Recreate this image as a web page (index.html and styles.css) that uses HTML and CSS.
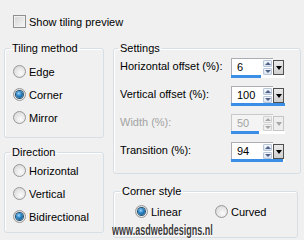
FILE: index.html
```html
<!DOCTYPE html>
<html lang="en">
<head>
    <meta charset="UTF-8">
    <title>Tiling settings</title>
    <link rel="stylesheet" href="styles.css">
</head>
<body>
    <div class="preview">
        <span class="checkbox"></span>
        <span>Show tiling preview</span>
    </div>

    <div class="panels">
        <!-- Left column -->
        <div class="left">
            <fieldset class="group tiling">
                <legend>Tiling method</legend>
                <div class="opt"><span class="radio"></span>Edge</div>
                <div class="opt"><span class="radio on"></span>Corner</div>
                <div class="opt"><span class="radio"></span>Mirror</div>
            </fieldset>

            <fieldset class="group direction">
                <legend>Direction</legend>
                <div class="opt"><span class="radio"></span>Horizontal</div>
                <div class="opt"><span class="radio"></span>Vertical</div>
                <div class="opt"><span class="radio on"></span>Bidirectional</div>
            </fieldset>
        </div>

        <!-- Right column -->
        <div class="right">
            <fieldset class="group settings">
                <legend>Settings</legend>
                <div class="row">
                    <span class="label">Horizontal offset (%):</span>
                    <div class="num">
                        <div class="num-top">
                            <span class="value">6</span>
                            <span class="spin"><i class="up"></i><i class="down"></i></span>
                            <span class="drop"></span>
                        </div>
                        <div class="bar"><span style="width: 30px"></span></div>
                    </div>
                </div>
                <div class="row">
                    <span class="label">Vertical offset (%):</span>
                    <div class="num">
                        <div class="num-top">
                            <span class="value">100</span>
                            <span class="spin"><i class="up"></i><i class="down"></i></span>
                            <span class="drop"></span>
                        </div>
                        <div class="bar"><span style="width: 54px"></span></div>
                    </div>
                </div>
                <div class="row disabled">
                    <span class="label">Width (%):</span>
                    <div class="num">
                        <div class="num-top">
                            <span class="value">50</span>
                            <span class="spin"><i class="up"></i><i class="down"></i></span>
                            <span class="drop"></span>
                        </div>
                        <div class="bar"><span style="width: 28px"></span></div>
                    </div>
                </div>
                <div class="row">
                    <span class="label">Transition (%):</span>
                    <div class="num">
                        <div class="num-top">
                            <span class="value">94</span>
                            <span class="spin"><i class="up"></i><i class="down"></i></span>
                            <span class="drop"></span>
                        </div>
                        <div class="bar"><span style="width: 52px"></span></div>
                    </div>
                </div>
            </fieldset>

            <fieldset class="group corner">
                <legend>Corner style</legend>
                <div class="corner-opts">
                    <div class="opt wide"><span class="radio on"></span>Linear</div>
                    <div class="opt"><span class="radio"></span>Curved</div>
                </div>
            </fieldset>
        </div>
    </div>

    <div class="watermark">www.asdwebdesigns.nl</div>
</body>
</html>
```

FILE: styles.css
```css
body {
    margin: 0;
    width: 304px;
    height: 240px;
    overflow: hidden;
    position: relative;
    background-color: #f0f0f0;
    font-family: "Liberation Sans", Arial, sans-serif;
    font-size: 11px;
    color: #000;
}

/* checkbox row */
.preview {
    display: flex;
    align-items: center;
    gap: 3px;
    height: 13px;
    margin: 15px 0 0 13px;
}
.checkbox {
    width: 13px;
    height: 13px;
    box-sizing: border-box;
    border: 1px solid #8f8f8f;
    background: linear-gradient(135deg, #d3d3d3, #f7f7f7);
    box-shadow: inset 0 0 0 1px #f2f2f2;
}

.panels {
    display: flex;
    gap: 9px;
    margin-top: 13px;
    padding-left: 4px;
}
.left {
    width: 100px;
    display: flex;
    flex-direction: column;
    gap: 7px;
}
.right {
    width: 188px;
    display: flex;
    flex-direction: column;
    gap: 10px;
}

/* group boxes */
.group {
    margin: 0;
    padding: 0;
    min-width: 0;
    border: 1px solid #d5dfe5;
    border-radius: 3px;
    box-shadow: inset 1px 1px 0 #fff;
}
.group legend {
    margin-left: 5px;
    padding: 0 2px;
    height: 14px;
    line-height: 14px;
}
.tiling {
    padding: 5px 0 8px;
}
.direction {
    padding: 0 0 4px;
}
.settings legend {
    margin-left: 4px;
}
.settings {
    padding: 3px 0 3px;
}
.corner {
    width: 185px;
    box-sizing: border-box;
    padding: 2px 0 14px;
}
.corner legend {
    margin-left: 6px;
}

/* radio options */
.opt {
    display: flex;
    align-items: center;
    gap: 3px;
    height: 23px;
    padding-left: 8px;
}
.corner-opts {
    display: flex;
    padding-left: 13px;
}
.corner-opts .opt {
    padding-left: 8px;
}
.corner-opts .wide {
    width: 72px;
}
.radio {
    width: 13px;
    height: 13px;
    box-sizing: border-box;
    border-radius: 50%;
    border: 1px solid #979797;
    background: radial-gradient(circle at 60% 65%, #fbfbfb 0, #e4e4e4 55%, #cfcfcf 100%);
    display: flex;
    align-items: center;
    justify-content: center;
}
.radio.on::after {
    content: "";
    width: 7px;
    height: 7px;
    border-radius: 50%;
    background: radial-gradient(circle at 40% 35%, #9fd8ff 0, #2a86c8 40%, #0b4470 100%);
    box-shadow: 0 0 0 1px #24506f;
}

/* number fields */
.row {
    display: flex;
    height: 28px;
    padding-left: 6px;
}
.label {
    width: 111px;
    line-height: 17px;
}
.num {
    width: 54px;
    height: 20px;
    display: flex;
    flex-direction: column;
}
.num-top {
    display: flex;
    height: 17px;
}
.value {
    width: 31px;
    box-sizing: border-box;
    border: 1px solid #abadb3;
    border-right: 0;
    border-bottom: 0;
    background-color: #fff;
    padding-left: 5px;
    line-height: 16px;
}
.spin {
    width: 11px;
    box-sizing: border-box;
    background-color: #fff;
    border-top: 1px solid #abadb3;
    padding: 1px 1px 0 1px;
    display: flex;
    flex-direction: column;
    gap: 1px;
}
.spin i {
    flex: 1;
    border: 1px solid #b8c6d8;
    border-radius: 1px;
    background: linear-gradient(#f5f8fc, #d9e3ef);
    display: flex;
    align-items: center;
    justify-content: center;
}
.spin i::after {
    content: "";
    border-left: 3px solid transparent;
    border-right: 3px solid transparent;
}
.spin .up::after {
    border-bottom: 3px solid #4d6085;
}
.spin .down::after {
    border-top: 3px solid #4d6085;
}
.drop {
    width: 11px;
    height: 15px;
    margin-top: 2px;
    box-sizing: border-box;
    border: 1px solid #505050;
    background: linear-gradient(#eaeaea, #cfcfcf);
    display: flex;
    align-items: center;
    justify-content: center;
}
.drop::after {
    content: "";
    border-left: 3px solid transparent;
    border-right: 3px solid transparent;
    border-top: 4px solid #000;
}
.bar {
    height: 3px;
    background-color: #fff;
}
.bar span {
    display: block;
    height: 100%;
    background-color: #3a8ee6;
}

/* disabled row */
.disabled .label {
    color: #a3a3a3;
}
.disabled .value {
    background-color: #f4f4f4;
    color: #a3a3a3;
    border-color: #c9c9c9;
}
.disabled .spin {
    background-color: #f4f4f4;
    border-color: #c9c9c9;
}
.disabled .spin i {
    border-color: #d2d2d2;
    background: #f0f0f0;
}
.disabled .spin .up::after {
    border-bottom-color: #a8a8a8;
}
.disabled .spin .down::after {
    border-top-color: #a8a8a8;
}
.disabled .drop {
    border-color: #c5c5c5;
    background: #eeeeee;
}
.disabled .drop::after {
    border-top-color: #a8a8a8;
}

/* watermark over the bottom */
.watermark {
    position: absolute;
    left: 112px;
    top: 221px;
    font-size: 15px;
    font-weight: bold;
    line-height: 17px;
    color: #3a3a3a;
    text-shadow: 1px 1px 0 #fff, -1px 0 0 #fff;
    transform: scaleX(0.6);
    transform-origin: left top;
    white-space: nowrap;
}
```
